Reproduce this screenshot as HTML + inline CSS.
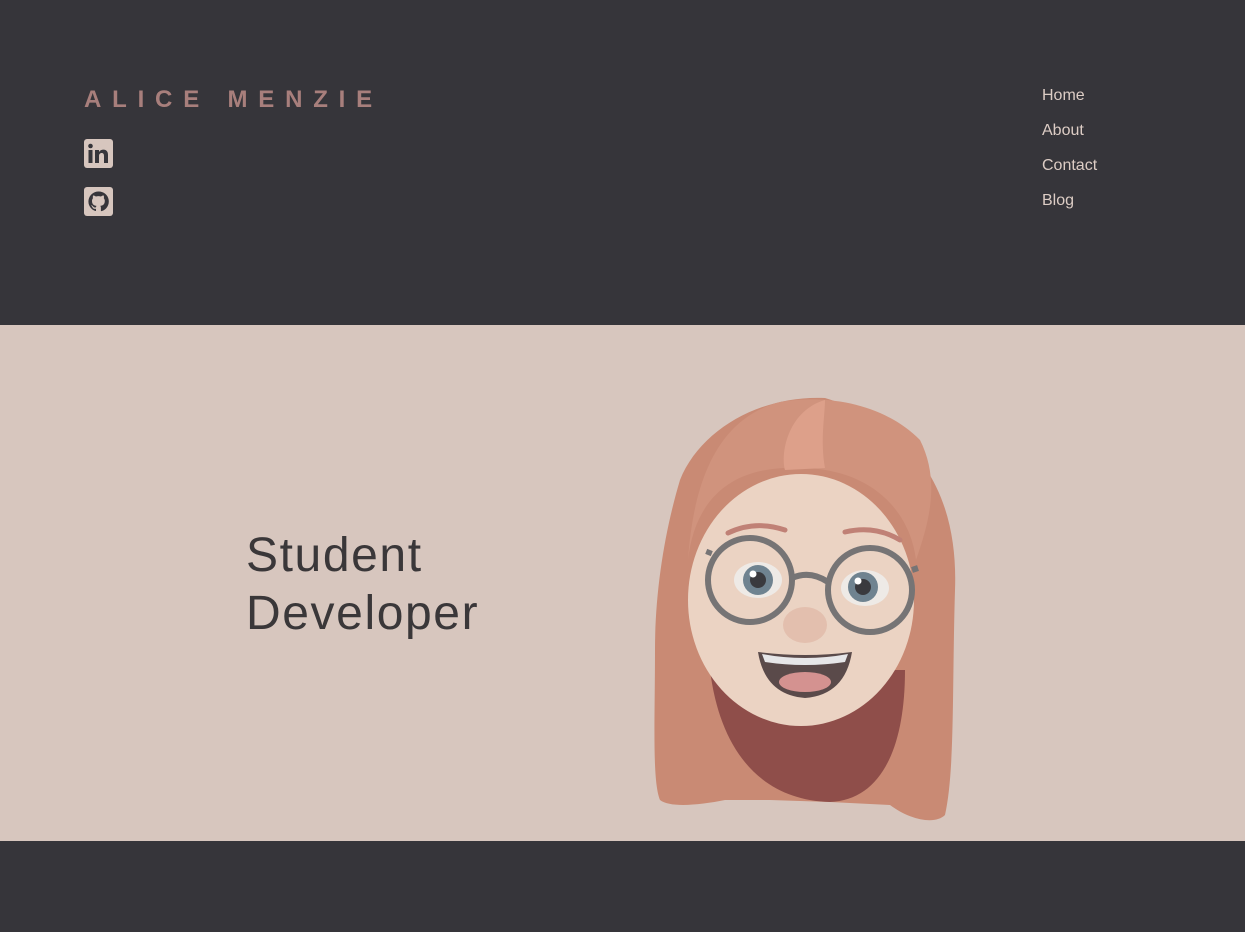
<!DOCTYPE html>
<html><head><style>
*{margin:0;padding:0;box-sizing:border-box}
body{width:1245px;height:932px;background:#36353a;font-family:"Liberation Sans",sans-serif;position:relative;overflow:hidden}
.title{position:absolute;left:84px;top:86px;font-size:24px;font-weight:bold;letter-spacing:10.8px;color:#a87f7c;line-height:28px}
.icon{position:absolute;left:84px;width:29px;height:29px;background:#d7c6be;border-radius:3px}
nav a{position:absolute;left:1042px;color:#ddcdc5;font-size:16px;text-decoration:none}
.hero{position:absolute;left:0;top:325px;width:1245px;height:516px;background:#d7c6be}
.h{position:absolute;left:246px;top:527px;font-size:48px;line-height:58px;color:#3a3739;font-weight:300;letter-spacing:1.6px}
</style></head><body>
<div class="title">ALICE MENZIE</div>
<div class="icon" style="top:139px"><svg width="29" height="29" viewBox="0 0 29 29"><circle cx="6.5" cy="7" r="2.3" fill="#36353a"/><rect x="4.5" y="11" width="4" height="13" fill="#36353a"/><path d="M11 11h4v2c1-1.7 2.8-2.4 4.5-2.4 3 0 4.5 2 4.5 5.5V24h-4v-7c0-1.8-.6-3-2.3-3-1.7 0-2.7 1.2-2.7 3v7h-4z" fill="#36353a"/></svg></div>
<div class="icon" style="top:187px"><svg width="29" height="29" viewBox="0 0 29 29"><path d="M14.5 4.5a10 10 0 0 0-3.2 19.5c.5.1.7-.2.7-.5v-1.8c-2.8.6-3.4-1.200-3.4-1.200-.5-1.200-1.100-1.500-1.100-1.500-.9-.6.1-.6.1-.6 1 .1 1.500 1 1.500 1 .9 1.500 2.300 1.100 2.900.8.1-.6.3-1.100.6-1.300-2.200-.3-4.600-1.100-4.600-5 0-1.100.4-2 1-2.700-.1-.3-.4-1.300.1-2.700 0 0 .8-.3 2.800 1a9.600 9.600 0 0 1 5 0c1.900-1.300 2.800-1 2.800-1 .5 1.400.2 2.400.1 2.700.6.7 1 1.600 1 2.700 0 3.900-2.400 4.700-4.600 5 .4.3.7.9.7 1.900v2.800c0 .3.2.6.7.5A10 10 0 0 0 14.5 4.5z" fill="#36353a"/></svg></div>
<nav><a style="top:87px">Home</a><a style="top:122px">About</a><a style="top:157px">Contact</a><a style="top:192px">Blog</a></nav>
<div class="hero"></div>
<div class="h">Student<br>Developer</div>
<svg style="position:absolute;left:640px;top:390px" width="330" height="440" viewBox="0 0 330 440">
<path d="M185 8C120 5 60 40 40 90 25 140 15 200 15 260 15 330 12 390 20 410 30 418 60 415 85 410L130 410 190 412 250 415C270 430 295 435 305 425 315 380 312 300 315 200 318 120 290 40 185 8z" fill="#c98a74"/>
<path d="M70 280C80 360 120 410 190 412 240 410 265 360 265 280z" fill="#8f4e4a"/>
<ellipse cx="161" cy="210" rx="113" ry="126" fill="#ebd3c3"/>
<path d="M48 170C55 110 90 75 160 78 230 78 270 120 276 170 290 130 300 90 280 50 240 10 180 5 140 12 90 25 55 70 48 170z" fill="#d0937d"/>
<path d="M185 10C150 20 140 60 145 80L185 78C180 50 185 25 185 10z" fill="#dda08a"/>
<path d="M88 143Q115 130 145 140M205 142Q235 135 260 150" stroke="#c08176" stroke-width="5" fill="none" stroke-linecap="round"/>
<ellipse cx="118" cy="190" rx="24" ry="18" fill="#eeeae6"/><circle cx="118" cy="190" r="15" fill="#6f8390"/><circle cx="118" cy="190" r="8" fill="#3a3a3e"/><circle cx="113" cy="184" r="3.5" fill="#fff"/>
<ellipse cx="225" cy="198" rx="24" ry="18" fill="#eeeae6"/><circle cx="223" cy="197" r="15" fill="#6f8390"/><circle cx="223" cy="197" r="8" fill="#3a3a3e"/><circle cx="218" cy="191" r="3.5" fill="#fff"/>
<circle cx="110" cy="190" r="42" fill="none" stroke="#767475" stroke-width="6"/>
<circle cx="230" cy="200" r="42" fill="none" stroke="#767475" stroke-width="6"/>
<path d="M152 188Q170 180 188 192M68 165L70 160M272 180L278 178" stroke="#767475" stroke-width="6" fill="none"/>
<ellipse cx="165" cy="235" rx="22" ry="18" fill="#e3bfae"/>
<path d="M118 262Q165 268 212 262Q205 305 165 308Q125 305 118 262z" fill="#5a4a4a"/>
<path d="M122 264Q165 272 208 264L205 272Q165 278 125 272z" fill="#e6e6e8"/>
<ellipse cx="165" cy="292" rx="26" ry="10" fill="#d49290"/>
</svg>
</body></html>
